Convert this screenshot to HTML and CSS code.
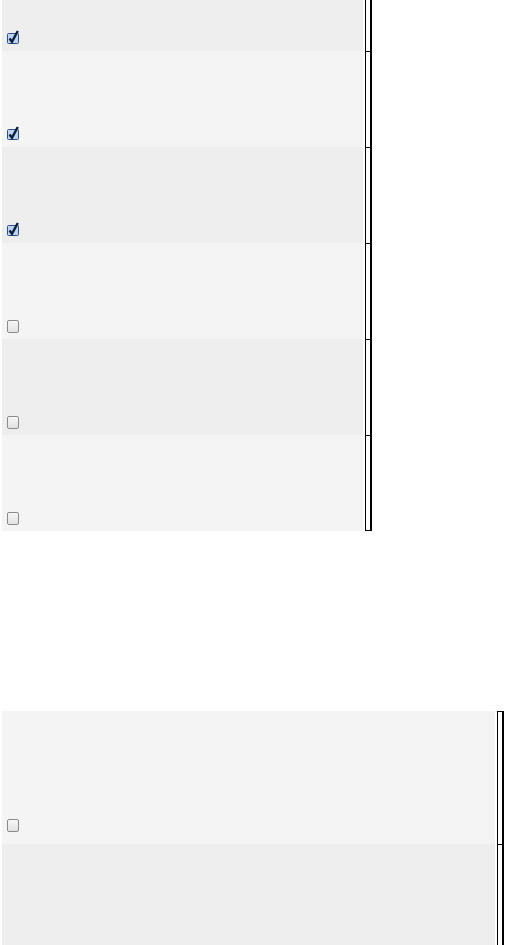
FILE: index.html
```html
<!DOCTYPE html>
<html>
<head>
<meta charset="utf-8">
<link rel="stylesheet" href="styles.css">
</head>
<body>
<div class="grid grid-top">
  <div class="row row-dark row-first">
    <div class="cell"><svg class="cb-on" viewBox="0 0 14 16" width="14" height="16"><rect x="1.5" y="4.5" width="11" height="10" rx="1" fill="#bcd4f2" stroke="#2c4f80"/><path d="M3.5 9.5 L6 12.8 L11.8 2" fill="none" stroke="#0b1f3c" stroke-width="2.4"/></svg></div>
    <div class="side"></div>
  </div>
  <div class="row row-light">
    <div class="cell"><svg class="cb-on" viewBox="0 0 14 16" width="14" height="16"><rect x="1.5" y="4.5" width="11" height="10" rx="1" fill="#bcd4f2" stroke="#2c4f80"/><path d="M3.5 9.5 L6 12.8 L11.8 2" fill="none" stroke="#0b1f3c" stroke-width="2.4"/></svg></div>
    <div class="side"></div>
  </div>
  <div class="row row-dark">
    <div class="cell"><svg class="cb-on" viewBox="0 0 14 16" width="14" height="16"><rect x="1.5" y="4.5" width="11" height="10" rx="1" fill="#bcd4f2" stroke="#2c4f80"/><path d="M3.5 9.5 L6 12.8 L11.8 2" fill="none" stroke="#0b1f3c" stroke-width="2.4"/></svg></div>
    <div class="side"></div>
  </div>
  <div class="row row-light">
    <div class="cell"><span class="cb-off"></span></div>
    <div class="side"></div>
  </div>
  <div class="row row-dark">
    <div class="cell"><span class="cb-off"></span></div>
    <div class="side"></div>
  </div>
  <div class="row row-light row-last">
    <div class="cell"><span class="cb-off"></span></div>
    <div class="side"></div>
  </div>
</div>

<div class="grid grid-bottom">
  <div class="row row-light">
    <div class="cell"><span class="cb-off"></span></div>
    <div class="side"></div>
  </div>
  <div class="row row-dark">
    <div class="cell"></div>
    <div class="side"></div>
  </div>
</div>
</body>
</html>
```
FILE: styles.css
```css
body {
  margin: 0;
  background: #ffffff;
  font-family: "Liberation Sans", Arial, sans-serif;
}

.grid {
  display: flex;
  flex-direction: column;
  padding-left: 2px;
}

.grid-top {
  width: 370px;
}

.grid-bottom {
  width: 502px;
  margin-top: 180px;
}

.row {
  display: flex;
  gap: 2px;
}

.grid-top .row {
  height: 96px;
}

.grid-top .row-first {
  height: 51px;
}

.grid-bottom .row {
  height: 133px;
}

.grid-bottom .row-dark {
  height: 110px;
}

.row-dark .cell {
  background: #eeeeee;
}

.row-light .cell {
  background: #f4f4f4;
}

.cell {
  flex: 1;
  display: flex;
  align-items: flex-end;
  padding: 0 0 6px 4px;
}

.grid-bottom .cell {
  padding-bottom: 12px;
}

.side {
  width: 4px;
  background: #ffffff;
  border-left: 1px solid #000;
  border-right: 2px solid #000;
  border-top: 1px solid #000;
}

.grid-top .row-first .side {
  border-top: none;
}

.row-last .side {
  border-bottom: 1px solid #000;
}

.cb-on {
  display: block;
}

.cb-off {
  display: block;
  width: 10px;
  height: 11px;
  margin-left: 1px;
  border: 1px solid #8a8a8a;
  border-radius: 2px;
  background: linear-gradient(#f7f7f7, #e2e2e2);
}
```
